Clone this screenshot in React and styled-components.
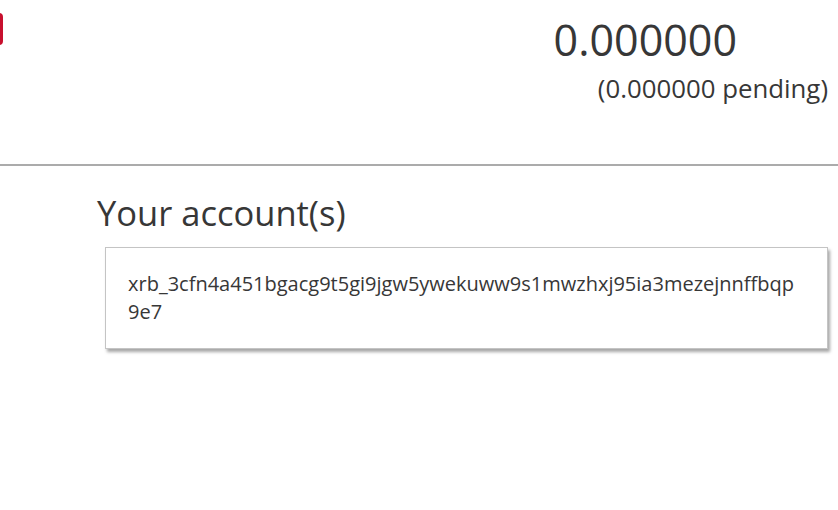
import React from "react";
import styled, { createGlobalStyle } from "styled-components";

const Global = createGlobalStyle`
  html, body { margin: 0; padding: 0; background: #ffffff; }
  body { font-family: "Open Sans", "Noto Sans", sans-serif; color: #373737; }
  * { box-sizing: border-box; }
`;

const Page = styled.div`
  width: 838px;
  height: 510px;
  overflow: hidden;
  background: #fff;
`;

const Header = styled.header`
  display: flex;
  align-items: flex-start;
  justify-content: space-between;
  height: 164px;
  padding-top: 13px;
`;

const MenuButton = styled.button`
  width: 34px;
  height: 32px;
  margin-left: -31px;
  border: none;
  border-radius: 4px;
  background: #c8102e;
  padding: 0;
`;

const Balance = styled.div`
  display: flex;
  flex-direction: column;
  align-items: flex-end;
  padding-top: 2px;
`;

const Amount = styled.div`
  font-size: 43px;
  line-height: 50px;
  margin-right: 101px;
`;

const Pending = styled.div`
  font-size: 25.8px;
  line-height: 34px;
  margin-top: 6px;
  margin-right: 10px;
`;

const Divider = styled.hr`
  margin: 0;
  border: none;
  height: 2px;
  background: #ababab;
`;

const Section = styled.section`
  padding: 24px 10px 0 97px;
`;

const Title = styled.h2`
  margin: 0;
  font-size: 34.5px;
  font-weight: 400;
  line-height: 46px;
`;

const AccountBox = styled.div`
  margin: 11px 0 0 8px;
  width: 723px;
  min-height: 102px;
  padding: 22px 22px 18px 22px;
  border: 1px solid #c4c4c4;
  box-shadow: 2px 3px 3px rgba(0, 0, 0, 0.35);
  background: #fff;
  font-size: 20px;
  line-height: 28px;
  word-break: break-all;
`;

export default function App() {
  return (
    <Page>
      <Global />
      <Header>
        <MenuButton aria-label="menu" />
        <Balance>
          <Amount>0.000000</Amount>
          <Pending>(0.000000 pending)</Pending>
        </Balance>
      </Header>
      <Divider />
      <Section>
        <Title>Your account(s)</Title>
        <AccountBox>
          xrb_3cfn4a451bgacg9t5gi9jgw5ywekuww9s1mwzhxj95ia3mezejnnffbqp9e7
        </AccountBox>
      </Section>
    </Page>
  );
}
